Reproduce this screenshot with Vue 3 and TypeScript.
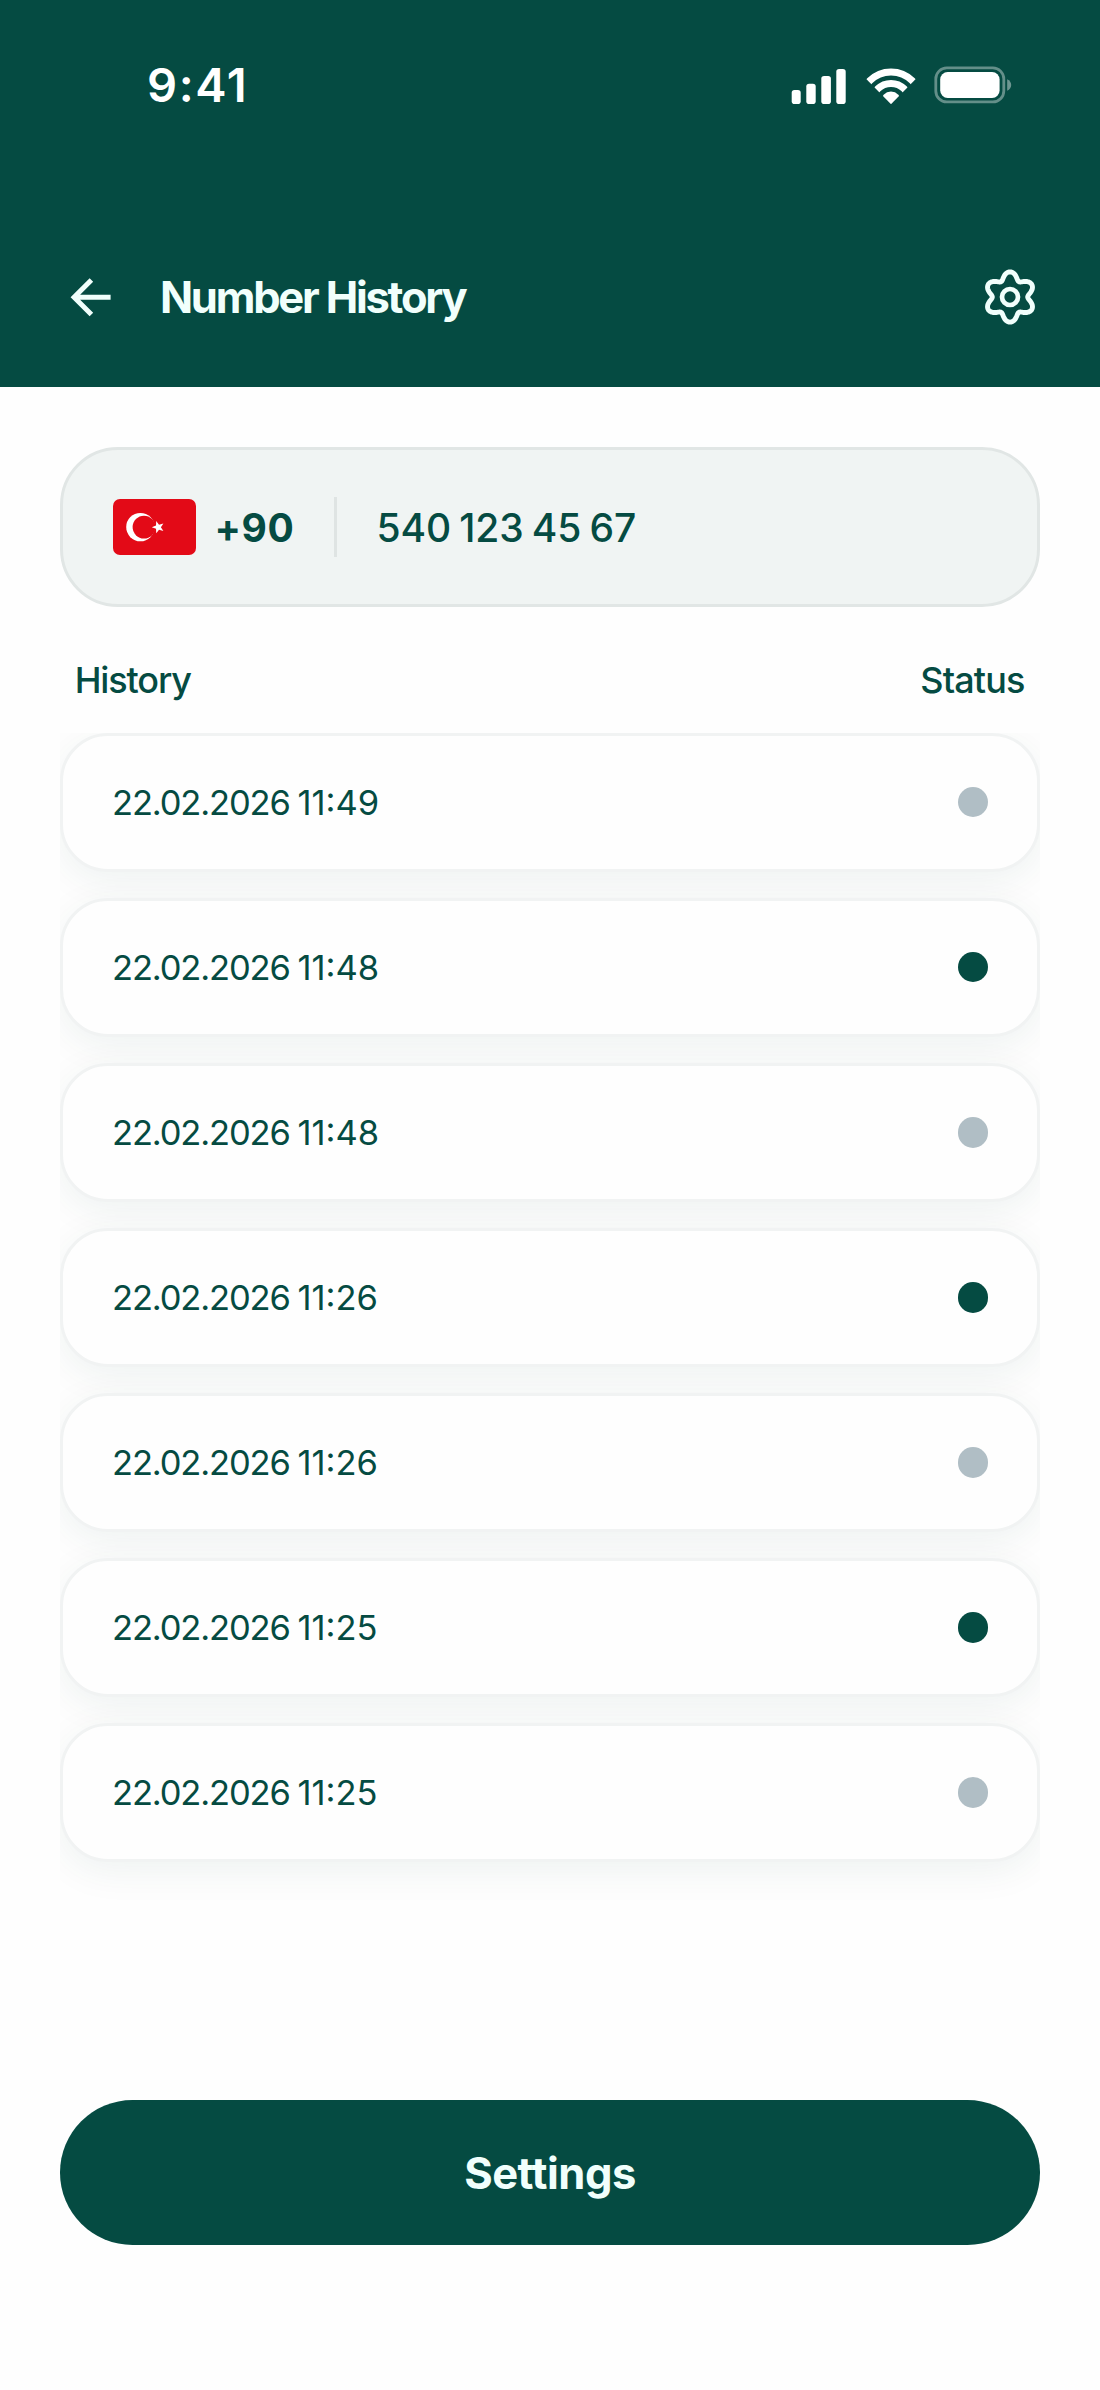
<script setup lang="ts">
interface Entry {
  id: number
  date: string
  time: string
  online: boolean
}

const entries: Entry[] = [
  { id: 1, date: '22.02.2026', time: '11:49', online: false },
  { id: 2, date: '22.02.2026', time: '11:48', online: true },
  { id: 3, date: '22.02.2026', time: '11:48', online: false },
  { id: 4, date: '22.02.2026', time: '11:26', online: true },
  { id: 5, date: '22.02.2026', time: '11:26', online: false },
  { id: 6, date: '22.02.2026', time: '11:25', online: true },
  { id: 7, date: '22.02.2026', time: '11:25', online: false },
]

// Six-toothed gear outline: a circle with a rounded radial wave.
const gearPath =
  Array.from({ length: 180 }, (_, i) => {
    const a = (i / 180) * Math.PI * 2
    const r = 21.7 + 3.7 * Math.cos(6 * a) - 0.3 * Math.cos(12 * a)
    const x = 30 + r * Math.sin(a)
    const y = 30 - r * Math.cos(a)
    return `${i ? 'L' : 'M'}${x.toFixed(2)} ${y.toFixed(2)}`
  }).join('') + 'Z'

// Five-pointed star with one tip facing the crescent.
const starPoints = Array.from({ length: 10 }, (_, i) => {
  const a = Math.PI + (i * Math.PI) / 5
  const r = i % 2 ? 2.7 : 6.4
  return `${(45.2 + r * Math.cos(a)).toFixed(2)},${(28.2 + r * Math.sin(a)).toFixed(2)}`
}).join(' ')
</script>

<template>
  <main class="screen">
    <header class="top">
      <div class="status-bar">
        <span class="time">9:41</span>
        <div class="indicators">
          <svg class="signal" width="55" height="36" viewBox="0 0 55 36">
            <rect x="0.7" y="22" width="9" height="14" rx="2.8" />
            <rect x="15.3" y="15.7" width="9.4" height="20.3" rx="2.8" />
            <rect x="30.3" y="8" width="9.6" height="28" rx="2.8" />
            <rect x="45.3" y="1" width="9.4" height="35" rx="2.8" />
          </svg>
          <svg class="wifi" width="50" height="36" viewBox="0 0 50 36">
            <defs>
              <clipPath id="wifi-fan">
                <path d="M25 36.2L-11 -0.5V-10H61V-0.5Z" />
              </clipPath>
            </defs>
            <g clip-path="url(#wifi-fan)">
              <circle cx="25" cy="34" r="30.1" fill="none" stroke="#fff" stroke-width="7" />
              <circle cx="25" cy="34" r="18.6" fill="none" stroke="#fff" stroke-width="7" />
              <circle cx="25" cy="34" r="10.4" />
            </g>
          </svg>
          <svg class="battery" width="78" height="38" viewBox="0 0 78 38">
            <rect x="1.8" y="1.9" width="68" height="34" rx="11" fill="none" stroke="#fff" stroke-opacity="0.38" stroke-width="2.8" />
            <rect x="6.2" y="6.1" width="59.4" height="25.8" rx="7.5" />
            <path d="M73.2 13.2C75.8 14.4 77.2 16.6 77.2 19C77.2 21.4 75.8 23.6 73.2 24.8Z" fill-opacity="0.42" />
          </svg>
        </div>
      </div>
      <nav class="nav">
        <button class="icon-button" aria-label="Back">
          <svg width="60" height="60" viewBox="0 0 60 60">
            <path d="M50.6 30.3H14.4M31.4 13L14.1 30.3L31.4 47.6" fill="none" stroke="#f1fffc" stroke-width="5" />
          </svg>
        </button>
        <h1 class="title">Number History</h1>
        <button class="icon-button gear" aria-label="Settings">
          <svg width="60" height="60" viewBox="0 0 60 60">
            <path :d="gearPath" fill="none" stroke="#f1fffc" stroke-width="4.9" stroke-linejoin="round" />
            <circle cx="30" cy="30" r="8" fill="none" stroke="#f1fffc" stroke-width="4.7" />
          </svg>
        </button>
      </nav>
    </header>

    <section class="phone">
      <svg class="flag" width="83" height="56" viewBox="0 0 83 56">
        <rect width="83" height="56" rx="7" fill="#e30a17" />
        <circle cx="27.4" cy="28.1" r="14.2" fill="#fff" />
        <circle cx="31" cy="28.1" r="11.4" fill="#e30a17" />
        <polygon :points="starPoints" fill="#fff" />
      </svg>
      <span class="code">+90</span>
      <span class="divider"></span>
      <span class="number">540 123 45 67</span>
    </section>

    <div class="labels">
      <span>History</span>
      <span class="label-status">Status</span>
    </div>

    <ul class="list">
      <li v-for="entry in entries" :key="entry.id" class="entry">
        <span class="stamp"><span class="date">{{ entry.date }}</span>{{ ' ' }}<span>{{ entry.time }}</span></span>
        <span class="dot" :class="{ online: entry.online }"></span>
      </li>
    </ul>

    <button class="cta">Settings</button>
  </main>
</template>

<style>
body {
  margin: 0;
  background: #fefefe;
}
</style>

<style scoped>
.screen {
  box-sizing: border-box;
  width: 1100px;
  height: 2390px;
  display: flex;
  flex-direction: column;
  background: #fefefe;
  color: #054b42;
  font-family: Inter, 'Liberation Sans', sans-serif;
  overflow: hidden;
}
button {
  border: 0;
  padding: 0;
  background: none;
  color: inherit;
  font-family: inherit;
}
svg {
  display: block;
  fill: #fff;
}
.top {
  flex: none;
  height: 387px;
  background: #054b42;
  color: #fff;
}
.status-bar {
  display: flex;
  align-items: center;
  justify-content: space-between;
  height: 170px;
  padding: 0 88.5px 0 147px;
}
.time {
  font-size: 47px;
  font-weight: 600;
  line-height: 60px;
  letter-spacing: 1.6px;
}
.indicators {
  display: flex;
  align-items: center;
}
.signal {
  margin-top: 1px;
}
.wifi {
  margin: 1px 18px 0 19.5px;
}
.nav {
  display: flex;
  align-items: center;
  height: 60px;
  margin-top: 97px;
  padding: 0 60.5px 0 60px;
}
.icon-button {
  flex: none;
  width: 60px;
  height: 60px;
}
.title {
  margin: 0 0 0 39.9px;
  font-size: 43.5px;
  font-weight: 700;
  line-height: 60px;
  letter-spacing: -2.22px;
  color: #f1fffc;
}
.gear {
  margin-left: auto;
}
.phone {
  box-sizing: border-box;
  flex: none;
  display: flex;
  align-items: center;
  width: 980px;
  height: 160px;
  margin: 60px 60px 0;
  padding: 0 50px;
  border: 3px solid #e1e6e5;
  border-radius: 58px;
  background: #f0f4f3;
}
.code {
  margin-left: 18.5px;
  font-size: 39px;
  font-weight: 700;
  letter-spacing: 0.6px;
}
.divider {
  width: 2.5px;
  height: 60px;
  margin-left: 40px;
  background: #dfe4e3;
}
.number {
  margin-left: 39.5px;
  font-size: 39px;
  font-weight: 500;
  letter-spacing: -0.1px;
  word-spacing: -2.05px;
}
.labels {
  flex: none;
  display: flex;
  justify-content: space-between;
  height: 50px;
  margin-top: 48px;
  padding: 0 75.5px 0 74.7px;
  font-size: 36px;
  font-weight: 500;
  line-height: 50px;
  letter-spacing: -1.14px;
}
.label-status {
  letter-spacing: -0.87px;
}
.list {
  flex: none;
  display: flex;
  flex-direction: column;
  gap: 26px;
  margin: 27.6px 60px 0;
  padding: 0 0 60px;
  list-style: none;
  overflow: hidden;
}
.entry {
  box-sizing: border-box;
  display: flex;
  align-items: center;
  justify-content: space-between;
  height: 139.1px;
  padding: 0 49px;
  border: 3px solid #f1f3f3;
  border-radius: 48px;
  background: #fefefe;
  box-shadow: 0 9px 38px rgba(5, 75, 66, 0.065);
}
.stamp {
  font-size: 34.5px;
  font-weight: 400;
  word-spacing: -2px;
}
.date {
  letter-spacing: -1.14px;
}
.dot {
  width: 30.5px;
  height: 30.5px;
  border-radius: 50%;
  background: #b0bec5;
}
.dot.online {
  background: #054b42;
}
.cta {
  flex: none;
  height: 145px;
  margin: 177.4px 60px 0;
  padding-top: 2px;
  border-radius: 73px;
  background: #054b42;
  color: #f1fffc;
  font-size: 43.5px;
  font-weight: 700;
  letter-spacing: -0.48px;
}
</style>
